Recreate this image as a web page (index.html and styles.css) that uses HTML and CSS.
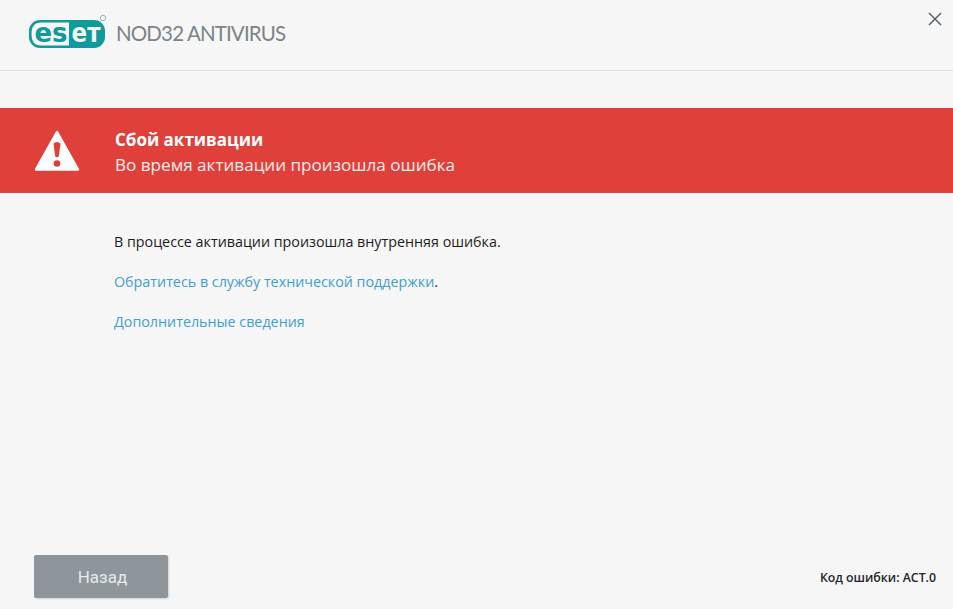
FILE: index.html
```html
<!DOCTYPE html>
<html lang="ru">
<head>
<meta charset="utf-8">
<title>ESET NOD32 Antivirus</title>
<link rel="stylesheet" href="styles.css">
</head>
<body>
<div class="window">
  <header class="topbar">
    <div class="brand">
      <svg class="logo" width="80" height="38" viewBox="0 0 80 38">
        <rect x="1" y="8" width="76" height="28" rx="11" fill="#0f9a9c"/>
        <path d="M13 10.500H41V33.500H13Q3.500 33.500 3.500 22Q3.500 10.500 13 10.500Z" fill="#f6f6f6"/>
        <text class="logo-es" x="6.500" y="30" textLength="33" lengthAdjust="spacingAndGlyphs">es</text>
        <text class="logo-et" x="43.500" y="30" textLength="29" lengthAdjust="spacingAndGlyphs">eт</text>
        <circle cx="75" cy="6" r="2.700" fill="none" stroke="#7cc3c5" stroke-width="1"/>
      </svg>
      <span class="product">NOD32 ANTIVIRUS</span>
    </div>
    <svg class="close" width="14" height="14" viewBox="0 0 14 14"><path d="M1 1L13 13M13 1L1 13" stroke="#4d5860" stroke-width="1.400" fill="none"/></svg>
  </header>
  <section class="banner">
    <svg class="warn" width="46" height="42" viewBox="0 0 46 42">
      <path d="M23 2L44 39.500H2Z" fill="#fff" stroke="#fff" stroke-width="2.500" stroke-linejoin="round"/>
      <path d="M19.500 13.500Q23 10.500 26.500 13.500L24.800 26.500Q23 28 21.200 26.500Z" fill="#e0403a"/>
      <circle cx="23" cy="33.500" r="3.300" fill="#e0403a"/>
    </svg>
    <div class="banner-text">
      <h1 class="banner-title">Сбой активации</h1>
      <p class="banner-sub">Во время активации произошла ошибка</p>
    </div>
  </section>
  <main class="content">
    <p class="line">В процессе активации произошла внутренняя ошибка.</p>
    <p class="line"><a class="link">Обратитесь в службу технической поддержки</a>.</p>
    <p class="line"><a class="link">Дополнительные сведения</a></p>
  </main>
  <footer class="footer">
    <button class="back">Назад</button>
    <span class="code">Код ошибки: ACT.0</span>
  </footer>
</div>
</body>
</html>
```

FILE: styles.css
```css
* { box-sizing: border-box; }
html, body { margin: 0; height: 100%; }
body { background: #f6f6f6; font-family: "Open Sans", "Noto Sans", sans-serif; overflow: hidden; }
.window { width: 953px; height: 609px; display: flex; flex-direction: column; }
.topbar { height: 71px; flex: none; display: flex; justify-content: space-between; border-bottom: 1px solid #dfdfdf; padding: 12px 11px 0 28px; }
.brand { display: flex; align-items: flex-start; gap: 8px; }
.logo { display: block; }
.logo-es, .logo-et { font-family: "DejaVu Sans", sans-serif; font-weight: 700; font-size: 27px; }
.logo-es { fill: #0f9a9c; }
.logo-et { fill: #f6f6f6; }
.product { font-family: "Lato", sans-serif; font-size: 20.500px; letter-spacing: -0.85px; color: #7c8387; margin-top: 8px; line-height: 26px; }
.close { display: block; }
.banner { margin-top: 37px; height: 85px; flex: none; background: #e0403a; display: flex; align-items: center; padding-left: 34px; }
.warn { display: block; flex: none; }
.banner-text { margin-left: 35px; padding-top: 3px; color: #fff; }
.banner-title { margin: 0; font-size: 17px; font-weight: 700; line-height: 24px; }
.banner-sub { margin: 0; font-size: 17.100px; line-height: 25px; color: #fdeceb; }
.content { flex: 1; padding: 39px 0 0 114px; display: flex; flex-direction: column; gap: 20px; }
.line { margin: 0; font-size: 14.300px; line-height: 20px; color: #1c1c1c; }
.link { color: #3d9fd2; }
.footer { height: 74px; flex: none; display: flex; justify-content: space-between; align-items: flex-start; padding: 20px 17px 0 34px; }
.back { width: 134px; height: 43px; padding: 0 0 0 3px; border: 0; border-radius: 2px; background: #8e969c; color: #e6e8ea; font-family: "Roboto", sans-serif; font-size: 17px; box-shadow: 1px 1px 2px rgba(0,0,0,.15); }
.code { font-size: 12.300px; font-weight: 600; color: #23262a; line-height: 18px; margin-top: 14px; }
```
